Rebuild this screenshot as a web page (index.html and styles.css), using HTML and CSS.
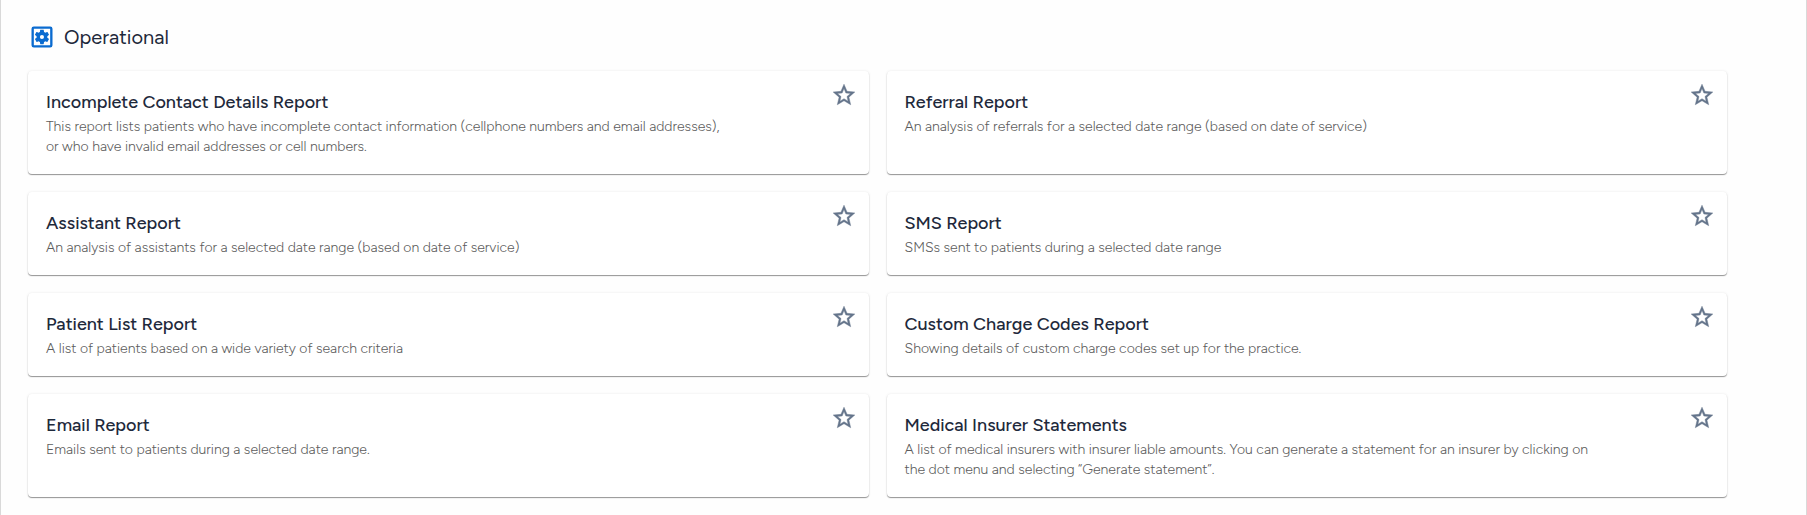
FILE: index.html
```
<!DOCTYPE html>
<html lang="en">
  <head>
    <meta charset="UTF-8" />
    <meta name="viewport" content="width=device-width, initial-scale=1.0" />
    <link rel="stylesheet" href="styles.css">
    <title>Reports</title>
  </head>
  <body>
    <svg class="sprite" aria-hidden="true">
      <symbol id="star" viewBox="0 0 24 24">
        <path d="M22 9.24l-7.19-.62L12 2 9.19 8.63 2 9.24l5.46 4.73L5.82 21 12 17.27 18.18 21l-1.63-7.03L22 9.24zM12 15.4l-3.76 2.27 1-4.28-3.32-2.88 4.38-.38L12 6.1l1.71 4.04 4.38.38-3.32 2.88 1 4.28L12 15.4z" />
      </symbol>
    </svg>

    <main class="reports">
      <h2 class="section-title">
        <svg class="section-icon" viewBox="0 0 24 24" aria-hidden="true">
          <path fill-rule="evenodd" d="M5 3h14a2 2 0 0 1 2 2v14a2 2 0 0 1-2 2H5a2 2 0 0 1-2-2V5a2 2 0 0 1 2-2zM5 5v14h14V5z" />
          <path fill-rule="evenodd" transform="translate(1.4 1.4) scale(.88)" d="M17.25 12c0 .23-.02.46-.05.68l1.48 1.16c.13.11.17.3.08.45l-1.4 2.42c-.09.15-.27.21-.43.15l-1.74-.7c-.36.28-.76.51-1.18.69l-.26 1.85c-.03.17-.18.3-.35.3h-2.8c-.17 0-.32-.13-.35-.29l-.26-1.85c-.43-.18-.82-.41-1.18-.69l-1.74.7c-.16.06-.34 0-.43-.15l-1.4-2.42c-.09-.15-.05-.34.08-.45l1.48-1.16A5.6 5.6 0 0 1 6.75 12c0-.23.02-.46.05-.69l-1.48-1.16c-.13-.11-.17-.3-.08-.45l1.4-2.42c.09-.15.27-.21.43-.15l1.74.7c.36-.28.76-.51 1.18-.69l.26-1.85c.03-.16.18-.29.35-.29h2.8c.17 0 .32.13.35.29l.26 1.85c.43.18.82.41 1.18.69l1.74-.7c.16-.06.34 0 .43.15l1.4 2.42c.09.15.05.34-.08.45l-1.48 1.16c.03.23.05.46.05.69zM12 10a2 2 0 1 0 0 4 2 2 0 0 0 0-4z" />
        </svg>
        Operational
      </h2>

      <div class="report-grid">
        <article class="card">
          <h3>Incomplete Contact Details Report</h3>
          <p>This report lists patients who have incomplete contact information (cellphone numbers and email addresses), or who have invalid email addresses or cell numbers.</p>
          <button class="favourite" type="button" aria-label="Add to favourites"><svg><use href="#star" /></svg></button>
        </article>
        <article class="card">
          <h3>Referral Report</h3>
          <p>An analysis of referrals for a selected date range (based on date of service)</p>
          <button class="favourite" type="button" aria-label="Add to favourites"><svg><use href="#star" /></svg></button>
        </article>
        <article class="card">
          <h3>Assistant Report</h3>
          <p>An analysis of assistants for a selected date range (based on date of service)</p>
          <button class="favourite" type="button" aria-label="Add to favourites"><svg><use href="#star" /></svg></button>
        </article>
        <article class="card">
          <h3>SMS Report</h3>
          <p>SMSs sent to patients during a selected date range</p>
          <button class="favourite" type="button" aria-label="Add to favourites"><svg><use href="#star" /></svg></button>
        </article>
        <article class="card">
          <h3>Patient List Report</h3>
          <p>A list of patients based on a wide variety of search criteria</p>
          <button class="favourite" type="button" aria-label="Add to favourites"><svg><use href="#star" /></svg></button>
        </article>
        <article class="card">
          <h3>Custom Charge Codes Report</h3>
          <p>Showing details of custom charge codes set up for the practice.</p>
          <button class="favourite" type="button" aria-label="Add to favourites"><svg><use href="#star" /></svg></button>
        </article>
        <article class="card">
          <h3>Email Report</h3>
          <p>Emails sent to patients during a selected date range.</p>
          <button class="favourite" type="button" aria-label="Add to favourites"><svg><use href="#star" /></svg></button>
        </article>
        <article class="card">
          <h3>Medical Insurer Statements</h3>
          <p>A list of medical insurers with insurer liable amounts. You can generate a statement for an insurer by clicking on the dot menu and selecting “Generate statement”.</p>
          <button class="favourite" type="button" aria-label="Add to favourites"><svg><use href="#star" /></svg></button>
        </article>
      </div>
    </main>
  </body>
</html>
```
FILE: styles.css
```
* {
  box-sizing: border-box;
}
body {
  margin: 0;
  font-family: Figtree, Inter, sans-serif;
  color: #1e293b;
  background-color: #fefefe;
}
.sprite {
  display: none;
}
.reports {
  min-height: 100vh;
  padding: 23px 79px 16px 27px;
  border-left: 1px solid #d9d9d9;
  border-right: 1px solid #d9d9d9;
}

.section-title {
  display: flex;
  align-items: center;
  gap: 8px;
  height: 28px;
  margin: 0 0 20px;
  font-size: 20px;
  font-weight: 400;
}
.section-icon {
  width: 28px;
  height: 28px;
  fill: #0a6bd0;
}

.report-grid {
  display: grid;
  grid-template-columns: 1fr 1fr;
  gap: 18px;
}
.card {
  display: grid;
  grid-template-columns: minmax(0, 687px) auto;
  grid-template-rows: 28px auto;
  justify-content: space-between;
  align-content: start;
  padding: 18px 12px 17px 18px;
  background-color: #fff;
  border-radius: 4px;
  box-shadow: 0 1px 1px rgba(0, 0, 0, 0.4), 0 0 3px rgba(0, 0, 0, 0.08);
}
.card h3 {
  margin: 0;
  font-size: 18px;
  line-height: 26px;
  font-weight: 500;
}
.card p {
  grid-column: 1;
  margin: 0;
  font-size: 14px;
  line-height: 20px;
  font-weight: 300;
  color: #5c5c5c;
}

.favourite {
  grid-column: 2;
  grid-row: 1;
  width: 26px;
  height: 26px;
  margin-top: -7px;
  padding: 0;
  border: none;
  background: none;
  cursor: pointer;
}
.favourite svg {
  display: block;
  width: 26px;
  height: 26px;
  fill: #64748b;
  stroke: #64748b;
  stroke-width: 0.4;
}
```
